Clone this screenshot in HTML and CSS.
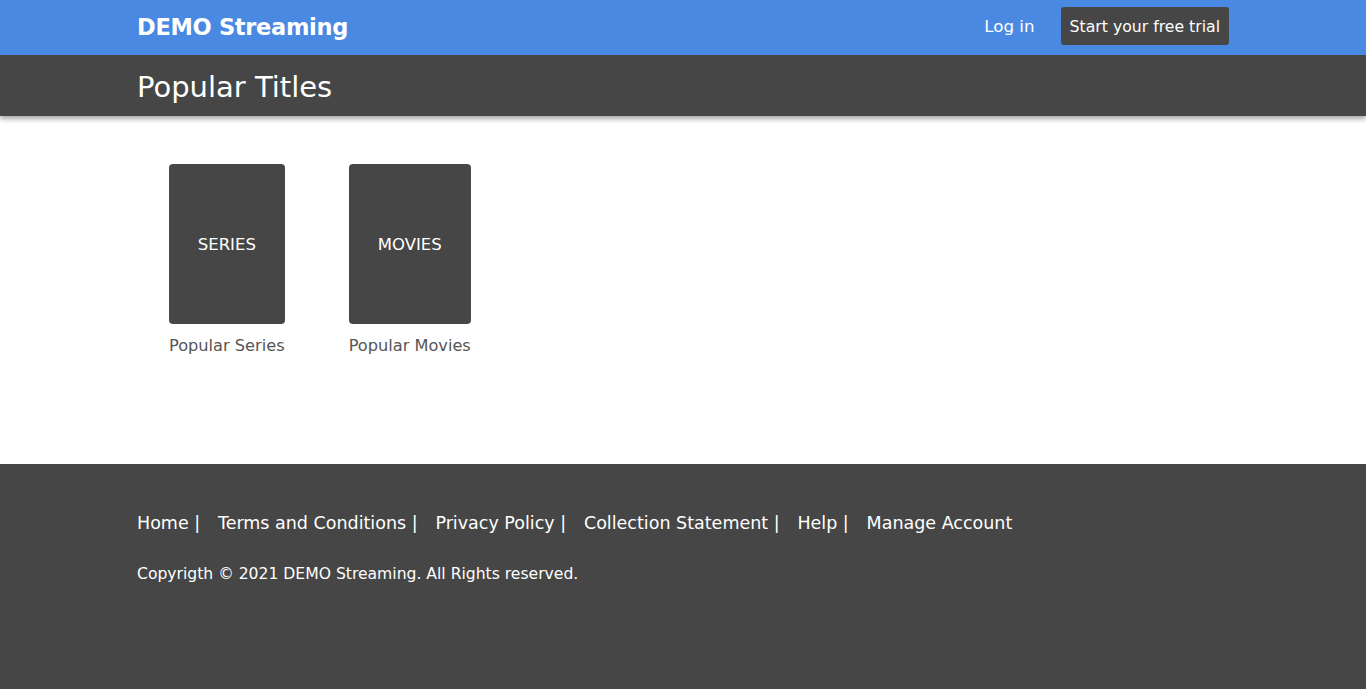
FILE: index.html
```html
<!DOCTYPE html>
<html lang="en">
<head>
<meta charset="utf-8">
<title>DEMO Streaming</title>
<link rel="stylesheet" href="styles.css">
</head>
<body>
<header class="topbar">
  <div class="container topbar-inner">
    <div class="brand">DEMO Streaming</div>
    <nav class="auth">
      <a class="login" href="#">Log in</a>
      <a class="trial" href="#">Start your free trial</a>
    </nav>
  </div>
</header>
<section class="subbar">
  <div class="container">
    <h1 class="page-title">Popular Titles</h1>
  </div>
</section>
<main class="content">
  <div class="container tiles">
    <a class="tile" href="#">
      <div class="poster">SERIES</div>
      <div class="caption">Popular Series</div>
    </a>
    <a class="tile" href="#">
      <div class="poster">MOVIES</div>
      <div class="caption">Popular Movies</div>
    </a>
  </div>
</main>
<footer class="footer">
  <div class="container">
    <nav class="footer-links">
      <a href="#">Home |</a>
      <a href="#">Terms and Conditions |</a>
      <a href="#">Privacy Policy |</a>
      <a href="#">Collection Statement |</a>
      <a href="#">Help |</a>
      <a href="#">Manage Account</a>
    </nav>
    <p class="copyright">Copyrigth © 2021 DEMO Streaming. All Rights reserved.</p>
  </div>
</footer>
</body>
</html>
```

FILE: styles.css
```css
* { box-sizing: border-box; }
html, body { margin: 0; padding: 0; }
body {
  font-family: "DejaVu Sans", "Open Sans", sans-serif;
  background: #ffffff;
  min-height: 689px;
  display: flex;
  flex-direction: column;
}
a { text-decoration: none; color: inherit; }
.container { width: 1092px; margin: 0 auto; }

.topbar { background: #4a89e2; height: 55px; position: relative; z-index: 2; }
.topbar-inner { height: 55px; display: flex; align-items: center; justify-content: space-between; }
.brand { color: #fff; font-weight: bold; font-size: 22.5px; letter-spacing: -0.3px; margin-top: -2px; }
.auth { display: flex; align-items: center; gap: 26px; margin-top: -3px; }
.login { color: #fff; font-size: 16.7px; }
.trial {
  color: #fff; font-size: 15.7px; background: #464646; border-radius: 3px;
  height: 38px; display: flex; align-items: center; padding: 0 9px;
}

.subbar { background: #464646; height: 61px; box-shadow: 0 3px 5px rgba(0,0,0,0.35); position: relative; z-index: 1; }
.page-title { margin: 0; color: #fff; font-weight: normal; font-size: 29px; line-height: 64px; }

.content { height: 348px; }
.tiles { display: flex; padding-top: 48px; }
.tile { margin: 0 32px; display: flex; flex-direction: column; }
.poster {
  height: 160px; background: #464646; border-radius: 4px; color: #fff;
  display: flex; align-items: center; justify-content: center; font-size: 16.5px;
}
.caption { color: #555; font-size: 16.2px; margin-top: 12px; white-space: nowrap; }

.footer { background: #464646; flex: 1; color: #fff; padding-top: 49px; }
.footer-links { display: flex; gap: 17.8px; font-size: 17.5px; }
.copyright { margin: 32px 0 0; font-size: 15.6px; }
```
